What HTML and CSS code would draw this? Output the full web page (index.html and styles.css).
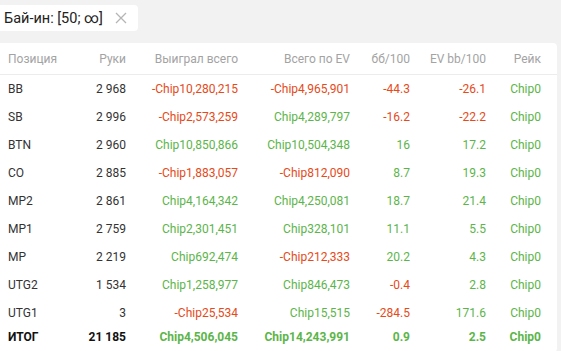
FILE: index.html
```html
<!DOCTYPE html>
<html lang="ru">
<head>
    <meta charset="UTF-8">
    <title>Статистика по позициям</title>
    <link rel="stylesheet" href="styles.css">
</head>
<body>
    <div class="filters">
        <div class="filter-chip">
            <span>Бай-ин: [50; ∞]</span>
            <svg class="chip-close" width="12" height="12" viewBox="0 0 12 12">
                <path d="M1 1 L11 11 M11 1 L1 11" stroke="#b5b5b5" stroke-width="1.3" fill="none"/>
            </svg>
        </div>
    </div>

    <div class="card">
        <table class="stats">
            <colgroup>
                <col style="width: 70px">
                <col style="width: 64px">
                <col style="width: 112px">
                <col style="width: 112px">
                <col style="width: 60px">
                <col style="width: 76px">
                <col>
            </colgroup>
            <thead>
                <tr>
                    <th class="pos">Позиция</th>
                    <th>Руки</th>
                    <th>Выиграл всего</th>
                    <th>Всего по EV</th>
                    <th>бб/100</th>
                    <th>EV bb/100</th>
                    <th>Рейк</th>
                </tr>
            </thead>
            <tbody>
                <tr><td class="pos">BB</td><td>2 968</td><td class="neg">-Chip10,280,215</td><td class="neg">-Chip4,965,901</td><td class="neg">-44.3</td><td class="neg">-26.1</td><td class="pos-val">Chip0</td></tr>
                <tr><td class="pos">SB</td><td>2 996</td><td class="neg">-Chip2,573,259</td><td class="pos-val">Chip4,289,797</td><td class="neg">-16.2</td><td class="neg">-22.2</td><td class="pos-val">Chip0</td></tr>
                <tr><td class="pos">BTN</td><td>2 960</td><td class="pos-val">Chip10,850,866</td><td class="pos-val">Chip10,504,348</td><td class="pos-val">16</td><td class="pos-val">17.2</td><td class="pos-val">Chip0</td></tr>
                <tr><td class="pos">CO</td><td>2 885</td><td class="neg">-Chip1,883,057</td><td class="neg">-Chip812,090</td><td class="pos-val">8.7</td><td class="pos-val">19.3</td><td class="pos-val">Chip0</td></tr>
                <tr><td class="pos">MP2</td><td>2 861</td><td class="pos-val">Chip4,164,342</td><td class="pos-val">Chip4,250,081</td><td class="pos-val">18.7</td><td class="pos-val">21.4</td><td class="pos-val">Chip0</td></tr>
                <tr><td class="pos">MP1</td><td>2 759</td><td class="pos-val">Chip2,301,451</td><td class="pos-val">Chip328,101</td><td class="pos-val">11.1</td><td class="pos-val">5.5</td><td class="pos-val">Chip0</td></tr>
                <tr><td class="pos">MP</td><td>2 219</td><td class="pos-val">Chip692,474</td><td class="neg">-Chip212,333</td><td class="pos-val">20.2</td><td class="pos-val">4.3</td><td class="pos-val">Chip0</td></tr>
                <tr><td class="pos">UTG2</td><td>1 534</td><td class="pos-val">Chip1,258,977</td><td class="pos-val">Chip846,473</td><td class="neg">-0.4</td><td class="pos-val">2.8</td><td class="pos-val">Chip0</td></tr>
                <tr><td class="pos">UTG1</td><td>3</td><td class="neg">-Chip25,534</td><td class="pos-val">Chip15,515</td><td class="neg">-284.5</td><td class="pos-val">171.6</td><td class="pos-val">Chip0</td></tr>
            </tbody>
            <tfoot>
                <tr><td class="pos">ИТОГ</td><td>21 185</td><td class="pos-val">Chip4,506,045</td><td class="pos-val">Chip14,243,991</td><td class="pos-val">0.9</td><td class="pos-val">2.5</td><td class="pos-val">Chip0</td></tr>
            </tfoot>
        </table>
    </div>
</body>
</html>
```

FILE: styles.css
```css
:root {
    --bg-color: #f2f2f2;
    --text-color: #333333;
    --muted-color: #a3a3a3;
    --border-color: #ececec;
    --red: #e64a19;
    --green: #5cb54a;
}

* {
    margin: 0;
    padding: 0;
    box-sizing: border-box;
}

body {
    background-color: var(--bg-color);
    color: var(--text-color);
    font-family: Roboto, "Liberation Sans", sans-serif;
    font-size: 12px;
    overflow: hidden;
}

.filters {
    display: flex;
    height: 43px;
    padding-top: 5px;
}

.filter-chip {
    display: flex;
    align-items: center;
    gap: 12px;
    height: 26px;
    margin-left: -6px;
    padding: 0 11px 0 10px;
    background: white;
    border-radius: 4px;
    font-size: 14.5px;
    color: #222;
}

.chip-close {
    display: block;
}

.card {
    width: 557px;
    background: white;
    border-radius: 0 4px 4px 0;
    padding-bottom: 4px;
}

.stats {
    width: 100%;
    border-collapse: collapse;
    table-layout: fixed;
}

.stats th,
.stats td {
    text-align: right;
    padding: 0 8px;
    white-space: nowrap;
}

.stats th:last-child,
.stats td:last-child {
    padding-right: 16px;
}

.stats th {
    height: 31px;
    font-weight: normal;
    color: var(--muted-color);
    border-bottom: 1px solid var(--border-color);
    padding-top: 1px;
}

.stats td {
    height: 28px;
    padding-top: 2px;
}

.stats .pos {
    text-align: left;
}

.stats tfoot td {
    height: 22px;
    padding-top: 0;
    font-weight: bold;
    color: #111;
}

.stats .neg {
    color: var(--red);
}

.stats .pos-val,
.stats tfoot .pos-val {
    color: var(--green);
}
```
